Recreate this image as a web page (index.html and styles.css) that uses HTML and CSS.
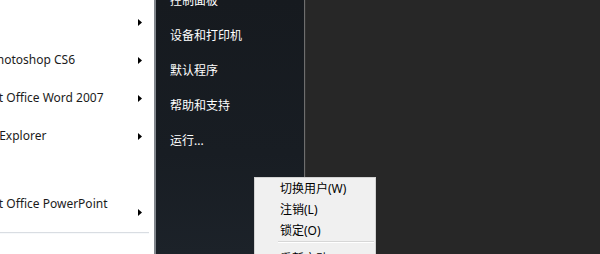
FILE: index.html
```html
<!DOCTYPE html>
<html lang="zh-CN">
<head>
<meta charset="utf-8">
<title>开始菜单</title>
<link rel="stylesheet" href="styles.css">
</head>
<body>
<div class="screen">
  <div class="programs">
    <ul class="prog-list">
      <li class="prog"><span class="label">入门</span><svg class="arrow" width="4" height="7" viewBox="0 0 4 7"><polygon points="0,0 4,3.5 0,7"/></svg></li>
      <li class="prog"><span class="label">Adobe Photoshop CS6</span><svg class="arrow" width="4" height="7" viewBox="0 0 4 7"><polygon points="0,0 4,3.5 0,7"/></svg></li>
      <li class="prog"><span class="label">Microsoft Office Word 2007</span><svg class="arrow" width="4" height="7" viewBox="0 0 4 7"><polygon points="0,0 4,3.5 0,7"/></svg></li>
      <li class="prog"><span class="label">Internet Explorer</span><svg class="arrow" width="4" height="7" viewBox="0 0 4 7"><polygon points="0,0 4,3.5 0,7"/></svg></li>
      <li class="prog"><span class="label">画图</span></li>
      <li class="prog"><span class="label">Microsoft Office PowerPoint<br>2007</span><svg class="arrow" width="4" height="7" viewBox="0 0 4 7"><polygon points="0,0 4,3.5 0,7"/></svg></li>
    </ul>
    <div class="sep"></div>
  </div>
  <div class="places">
    <ul class="place-list">
      <li>控制面板</li>
      <li>设备和打印机</li>
      <li>默认程序</li>
      <li>帮助和支持</li>
      <li>运行...</li>
    </ul>
  </div>
  <div class="desktop"></div>
  <div class="menu">
    <div class="menu-item">切换用户(W)</div>
    <div class="menu-item">注销(L)</div>
    <div class="menu-item">锁定(O)</div>
    <div class="menu-sep"></div>
    <div class="menu-item">重新启动(R)</div>
  </div>
</div>
</body>
</html>
```

FILE: styles.css
```css
* { box-sizing: border-box; }
html, body {
  margin: 0;
  padding: 0;
  width: 600px;
  height: 254px;
  overflow: hidden;
  background: #262626;
}
body {
  font-family: "Noto Sans", "Noto Sans CJK SC", sans-serif;
  font-size: 12px;
}
ul { list-style: none; margin: 0; padding: 0; }

.screen {
  position: relative;
  display: flex;
  width: 600px;
  height: 254px;
  overflow: hidden;
}

/* left white program list */
.programs {
  width: 156px;
  flex: none;
  background: #ffffff;
  border-right: 2px solid #80858b;
  display: flex;
  flex-direction: column;
}
.prog-list {
  padding-top: 3px;
  margin-left: -50px;
}
.prog {
  height: 38px;
  display: flex;
  align-items: center;
  padding-right: 12px;
}
.label {
  flex: 1;
  color: #1b1b1b;
  line-height: 16px;
  white-space: nowrap;
}
.arrow { flex: none; fill: #000; }
.sep {
  margin-top: 1px;
  width: 149px;
  height: 2px;
  border-top: 1px solid #d9dde2;
  border-bottom: 1px solid #f7f9fb;
}

/* dark places column */
.places {
  width: 149px;
  flex: none;
  background: linear-gradient(180deg, #161a1f 0%, #181d23 60%, #1c2229 100%);
  border-right: 1px solid #6e6e6e;
}
.place-list {
  margin-top: -18px;
  padding-left: 14px;
}
.place-list li {
  height: 35px;
  display: flex;
  align-items: center;
  color: #ffffff;
  font-size: 12px;
}

.desktop {
  flex: 1;
  background: #272727;
  border-left: 1px solid #303030;
}

/* shutdown sub menu */
.menu {
  position: absolute;
  left: 254px;
  top: 177px;
  width: 122px;
  height: 90px;
  background: #f0f0f0;
  border: 1px solid #d2d2d2;
}
.menu-item {
  height: 21px;
  display: flex;
  align-items: center;
  padding-left: 25px;
  color: #000;
  font-size: 12px;
}
.menu-item:first-child { margin-top: -1px; }
.menu-sep {
  height: 2px;
  margin: 1px 1px 4px 23px;
  border-top: 1px solid #d7d7d7;
  border-bottom: 1px solid #ffffff;
}
```
